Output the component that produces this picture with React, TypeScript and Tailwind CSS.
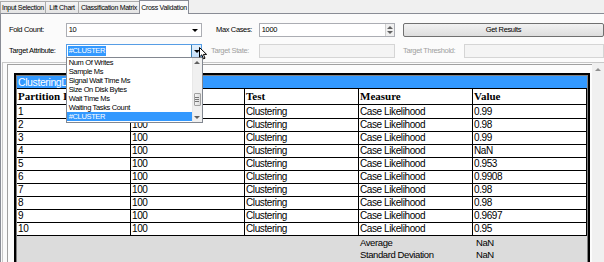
const ui = "font-['Liberation_Sans','Arial',sans-serif]";
const serif = "font-['Liberation_Serif','Times_New_Roman',serif]";

const attributes = [
  "Num Of Writes",
  "Sample Ms",
  "Signal Wait Time Ms",
  "Size On Disk Bytes",
  "Wait Time Ms",
  "Waiting Tasks Count",
  "#CLUSTER",
];

const results = [
  ["1", "0.99"],
  ["2", "0.98"],
  ["3", "0.99"],
  ["4", "NaN"],
  ["5", "0.953"],
  ["6", "0.9908"],
  ["7", "0.98"],
  ["8", "0.98"],
  ["9", "0.9697"],
  ["10", "0.95"],
];

function Tab({ label, width, active }: { label: string; width: string; active?: boolean }) {
  if (active) {
    return (
      <div className={`${width} h-[14px] -ml-px bg-[#fbfbfb] border border-b-0 border-[#898c95] flex items-center justify-center text-[7px] leading-none tracking-[-0.3px] whitespace-nowrap`}>
        {label}
      </div>
    );
  }
  return (
    <div className={`${width} h-[13px] -ml-px first:ml-0 bg-gradient-to-b from-[#f4f4f4] to-[#e4e4e4] border border-[#acacac] border-b-[#898c95] flex items-center justify-center text-[7px] leading-none tracking-[-0.3px] whitespace-nowrap`}>
      {label}
    </div>
  );
}

function DownArrow({ color = "border-t-black" }: { color?: string }) {
  return <div className={`w-0 h-0 border-l-[3px] border-r-[3px] border-t-[3px] border-l-transparent border-r-transparent ${color}`} />;
}

function UpArrow({ color = "border-b-black" }: { color?: string }) {
  return <div className={`w-0 h-0 border-l-[3px] border-r-[3px] border-b-[3px] border-l-transparent border-r-transparent ${color}`} />;
}

export default function App() {
  return (
    <div className={`w-[604px] h-[262px] overflow-hidden bg-[#f0f0f0] text-black ${ui}`}>
      {/* Tabs */}
      <div className="flex h-[14px] items-end">
        <Tab label="Input Selection" width="w-[46px]" />
        <Tab label="Lift Chart" width="w-[34px]" />
        <Tab label="Classification Matrix" width="w-[62px]" />
        <Tab label="Cross Validation" width="w-[50px]" active />
        <div className="flex-1 h-full border-b border-[#898c95]" />
      </div>

      {/* Panel */}
      <div className="h-[248px] bg-[#fbfbfb] border-l border-[#898c95] flex flex-col">
        {/* Row 1 */}
        <div className="flex items-center h-[14px] mt-[9px] pl-[8px] text-[7.5px] tracking-[-0.35px] whitespace-nowrap">
          <div className="w-[57px]">Fold Count:</div>
          <div className="w-[137px] h-[14px] bg-white border border-[#abadb3] flex items-center justify-between pl-[2px] pr-[3px]">
            <span>10</span>
            <DownArrow />
          </div>
          <div className="w-[57px] pl-[14px]">Max Cases:</div>
          <div className="w-[137px] h-[14px] bg-white border border-[#abadb3] flex items-center justify-between pl-[2px]">
            <span>1000</span>
            <div className="w-[9px] h-full flex flex-col items-center justify-center gap-[2px] bg-[#f0f0f0] border-l border-[#d0d0d0]">
              <UpArrow color="border-b-[#606060]" />
              <DownArrow color="border-t-[#606060]" />
            </div>
          </div>
          <div className="w-[8px]" />
          <button className="w-[201px] shrink-0 h-[14px] rounded-[2px] border border-[#707070] bg-gradient-to-b from-[#f2f2f2] to-[#dddddd] text-[7.5px] leading-none tracking-[-0.35px]">
            Get Results
          </button>
        </div>

        {/* Row 2 */}
        <div className="flex items-center h-[14px] mt-[7px] pl-[8px] text-[7.5px] tracking-[-0.35px] whitespace-nowrap">
          <div className="w-[57px]">Target Attribute:</div>
          <div className="relative w-[137px] h-[14px] bg-white border border-[#569de5] flex items-center pl-px">
            <span className="bg-[#3399ff] text-white px-px leading-[10px]">#CLUSTER</span>
            <div className="ml-auto w-[10px] h-full bg-gradient-to-b from-[#e5f1fb] to-[#c4e0fc] border-l border-[#3c7fb1] flex items-center justify-center">
              <DownArrow />
            </div>

            {/* Dropdown list */}
            <div className="absolute left-[-1px] top-[12px] z-10 w-[137px] h-[66px] bg-white border border-[#828790] flex">
              <div className="flex-1 flex flex-col">
                {attributes.map((a) => (
                  <div
                    key={a}
                    className={`h-[9px] leading-[9px] pl-[2px] text-[7.5px] ${a === "#CLUSTER" ? "bg-[#3399ff] text-white" : ""}`}
                  >
                    {a}
                  </div>
                ))}
              </div>
              <div className="w-[10px] flex flex-col bg-[#f0f0f0] border-l border-[#e8e8e8]">
                <div className="h-[9px] flex items-center justify-center">
                  <UpArrow color="border-b-[#606060]" />
                </div>
                <div className="h-[26px]" />
                <div className="h-[13px] mx-px rounded-[1px] border border-[#a0a0a0] bg-gradient-to-r from-[#f4f4f4] to-[#dcdcdc] flex flex-col items-center justify-center gap-px">
                  <div className="w-[4px] h-px bg-[#777]" />
                  <div className="w-[4px] h-px bg-[#777]" />
                  <div className="w-[4px] h-px bg-[#777]" />
                </div>
                <div className="h-[7px]" />
                <div className="h-[9px] flex items-center justify-center">
                  <DownArrow color="border-t-[#606060]" />
                </div>
              </div>
            </div>

            {/* Mouse cursor */}
            <svg className="absolute left-[132px] top-[2px] z-20" width="9" height="13" viewBox="0 0 9 13">
              <path d="M0.5 0.5 L0.5 10 L2.8 7.8 L4.5 11.8 L6 11.2 L4.4 7.4 L7.6 7.4 Z" fill="white" stroke="black" strokeWidth="1" strokeLinejoin="round" />
            </svg>
          </div>
          <div className="w-[57px] pl-[9px] text-[#a0a0a0]">Target State:</div>
          <div className="w-[137px] h-[14px] bg-[#f4f4f4] border border-[#d5d5d5]" />
          <div className="w-[8px]" />
          <div className="w-[61px] shrink-0 text-[#a0a0a0]">Target Threshold:</div>
          <div className="w-[140px] shrink-0 h-[14px] bg-[#f4f4f4] border border-[#d5d5d5]" />
        </div>

        {/* Report */}
        <div className="mt-[4px] ml-px flex flex-1 min-h-0 border-l border-t border-[#c8c8c8]">
          <div className="flex-1 pl-[4px] pt-px">
            <div className="h-full bg-[#fcfcfc] border-l border-t border-[#a0a0a0] overflow-hidden">
              <div className="ml-[6px] mt-[8px] w-[576px] border-2 border-black bg-[#808080] p-px">
                <div className="h-[12px] bg-[#3399ff] text-white text-[10.5px] leading-[12px] tracking-[-0.4px] pl-px whitespace-nowrap">
                  ClusteringDemo
                </div>
                <div className="bg-white">
                  <div className={`grid grid-cols-5 h-[17px] border-t border-b border-black ${serif} font-bold text-[11px]`}>
                    {["Partition ID", "Size", "Test", "Measure", "Value"].map((h) => (
                      <div key={h} className="border-r border-black pl-px flex items-center whitespace-nowrap overflow-hidden">
                        {h}
                      </div>
                    ))}
                  </div>
                  {results.map(([id, v], i) => (
                    <div key={id} className={`grid grid-cols-5 ${i === 0 ? "h-[14px]" : "h-[13px]"} border-b border-black text-[10px] leading-[12px] tracking-[-0.4px]`}>
                      <div className="border-r border-black pl-px flex items-center">{id}</div>
                      <div className="border-r border-black pl-px flex items-center">100</div>
                      <div className="border-r border-black pl-px flex items-center">Clustering</div>
                      <div className="border-r border-black pl-px flex items-center">Case Likelihood</div>
                      <div className="border-r border-black pl-px flex items-center">{v}</div>
                    </div>
                  ))}
                  <div className="grid grid-cols-5 h-[30px] bg-[#dcdcdc] text-[9.5px] leading-[12px] tracking-[-0.4px] pt-px whitespace-nowrap">
                    <div />
                    <div />
                    <div />
                    <div className="pl-px">
                      <div>Average</div>
                      <div>Standard Deviation</div>
                    </div>
                    <div className="pl-[3px]">
                      <div>NaN</div>
                      <div>NaN</div>
                    </div>
                  </div>
                </div>
              </div>
            </div>
          </div>
          <div className="w-[12px] bg-[#f0f0f0] flex flex-col items-center pt-[5px]">
            <UpArrow color="border-b-[#909090]" />
          </div>
        </div>
      </div>
    </div>
  );
}
